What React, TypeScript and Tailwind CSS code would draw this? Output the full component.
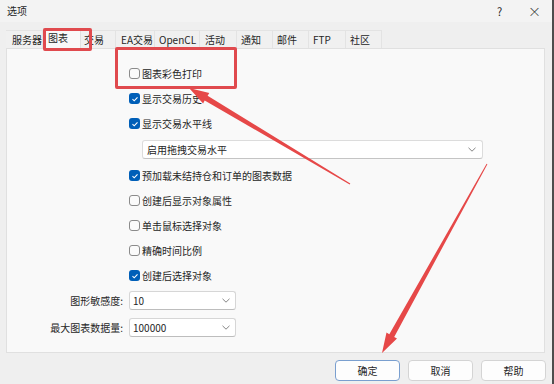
import React from "react";

const tabs = [
  { label: "服务器", w: 37, pl: 6 },
  { label: "图表", w: 38, active: true, pl: 4 },
  { label: "交易", w: 35, pl: 3 },
  { label: "EA交易", w: 39, pl: 5 },
  { label: "OpenCL", w: 45, pl: 4 },
  { label: "活动", w: 37, pl: 5 },
  { label: "通知", w: 36, pl: 4 },
  { label: "邮件", w: 36, pl: 4 },
  { label: "FTP", w: 37, pl: 4 },
  { label: "社区", w: 36, pl: 4 },
];

function Check({ on }: { on?: boolean }) {
  if (on) {
    return (
      <span className="w-[11px] h-[11px] rounded-[3px] bg-[#005fb8] flex items-center justify-center shrink-0">
        <svg width="8" height="8" viewBox="0 0 8 8">
          <path d="M1.5 4.2 L3.2 5.8 L6.5 2.3" fill="none" stroke="#fff" strokeWidth="1.1" />
        </svg>
      </span>
    );
  }
  return <span className="w-[11px] h-[11px] rounded-[3px] border border-[#8b8b8b] bg-[#fbfbfb] shrink-0" />;
}

function Row({ on, label }: { on?: boolean; label: string }) {
  return (
    <div className="h-[25px] flex items-center gap-[2px]">
      <Check on={on} />
      <span>{label}</span>
    </div>
  );
}

function Chevron() {
  return (
    <svg width="8" height="5" viewBox="0 0 8 5">
      <path d="M0.5 0.8 L4 4.2 L7.5 0.8" fill="none" stroke="#777" strokeWidth="0.9" />
    </svg>
  );
}

function Arrow({ tx, ty, px, py }: { tx: number; ty: number; px: number; py: number }) {
  const dx = px - tx;
  const dy = py - ty;
  const len = Math.hypot(dx, dy);
  const ux = dx / len;
  const uy = dy / len;
  const nx = -uy;
  const ny = ux;
  const bx = px - ux * 20;
  const by = py - uy * 20;
  const pt = (x: number, y: number) => `${x.toFixed(1)},${y.toFixed(1)}`;
  const pts = [
    pt(tx + nx * 0.5, ty + ny * 0.5),
    pt(bx + nx * 2.8, by + ny * 2.8),
    pt(bx + nx * 6, by + ny * 6),
    pt(px, py),
    pt(bx - nx * 6, by - ny * 6),
    pt(bx - nx * 2.8, by - ny * 2.8),
    pt(tx - nx * 0.5, ty - ny * 0.5),
  ].join(" ");
  return <polygon points={pts} fill="#e64848" />;
}

export default function App() {
  return (
    <div
      className="relative w-[554px] h-[384px] overflow-hidden bg-[#efefef] border-r-2 border-[#4d4d4d] flex flex-col text-[10px] leading-[14px] text-[#262626]"
      style={{ fontFamily: '"Noto Sans CJK SC", "Noto Sans", sans-serif' }}
    >
      {/* Title bar */}
      <div className="h-[22px] bg-[#f3f3f3] flex items-center">
        <span className="pl-[7px]">选项</span>
        <span className="ml-auto w-[35px] text-center text-[11px]">?</span>
        <span className="w-[35px] text-center text-[13px] font-light">×</span>
      </div>

      {/* Tabs */}
      <div className="mt-[5px] pl-[6px] flex items-end h-[21px]">
        {tabs.map((t) =>
          t.active ? (
            <div
              key={t.label}
              className="h-[21px] -mb-px relative z-10 bg-[#f9f9f9] border border-b-0 border-[#e0e0e0] pt-[2px]"
              style={{ width: t.w, paddingLeft: t.pl }}
            >
              {t.label}
            </div>
          ) : (
            <div
              key={t.label}
              className="h-[18px] bg-[#f0f0f0] border-r border-t border-[#e3e3e3] flex items-center"
              style={{ width: t.w, paddingLeft: t.pl }}
            >
              {t.label}
            </div>
          )
        )}
      </div>

      {/* Panel */}
      <div className="ml-[6px] w-[539px] h-[305px] border border-[#e0e0e0] bg-[#f9f9f9] flex flex-col">
        <div className="pl-[122px] pt-[12px] flex flex-col">
          <Row label="图表彩色打印" />
          <Row on label="显示交易历史" />
          <Row on label="显示交易水平线" />
          <div className="h-[27px] flex items-center">
            <div className="ml-[13px] w-[341px] h-[19px] bg-white border border-[#dcdcdc] border-b-[#c4c4c4] rounded-[3px] flex items-center pl-[4px] pr-[6px]">
              <span>启用拖拽交易水平</span>
              <span className="ml-auto flex">
                <Chevron />
              </span>
            </div>
          </div>
          <Row on label="预加载未结持仓和订单的图表数据" />
          <Row label="创建后显示对象属性" />
          <Row label="单击鼠标选择对象" />
          <Row label="精确时间比例" />
          <Row on label="创建后选择对象" />
        </div>
        <div className="mt-[3px] flex flex-col gap-[8px]">
          {[
            ["图形敏感度:", "10"],
            ["最大图表数据量:", "100000"],
          ].map(([l, v]) => (
            <div key={l} className="flex items-center h-[19px] gap-[6px]">
              <span className="w-[116px] text-right">{l}</span>
              <div className="w-[107px] h-[19px] bg-white border border-[#d6d6d6] border-b-[#bdbdbd] rounded-[3px] flex items-center pl-[3px] pr-[5px]">
                <span>{v}</span>
                <span className="ml-auto flex">
                  <Chevron />
                </span>
              </div>
            </div>
          ))}
        </div>
      </div>

      {/* Buttons */}
      <div className="mt-[7px] flex justify-end gap-[8px] pr-[6px]">
        <button className="w-[65px] h-[21px] rounded-[4px] bg-[#fdfdfd] border border-[#7a9fcf]">确定</button>
        <button className="w-[65px] h-[21px] rounded-[4px] bg-[#fdfdfd] border border-[#d4d4d4]">取消</button>
        <button className="w-[65px] h-[21px] rounded-[4px] bg-[#fdfdfd] border border-[#d4d4d4]">帮助</button>
      </div>

      {/* Annotations */}
      <div className="absolute left-[43px] top-[28px] w-[49px] h-[23px] border-[3px] border-[#e04a4e] rounded-[2px] z-20" />
      <div className="absolute left-[115px] top-[47px] w-[122px] h-[42px] border-[3px] border-[#e04a4e] rounded-[2px] z-20" />
      <svg className="absolute inset-0 z-20 pointer-events-none" width="554" height="384">
        <Arrow tx={350} ty={184} px={189} py={88} />
        <Arrow tx={487} ty={164} px={382} py={353} />
      </svg>
    </div>
  );
}
